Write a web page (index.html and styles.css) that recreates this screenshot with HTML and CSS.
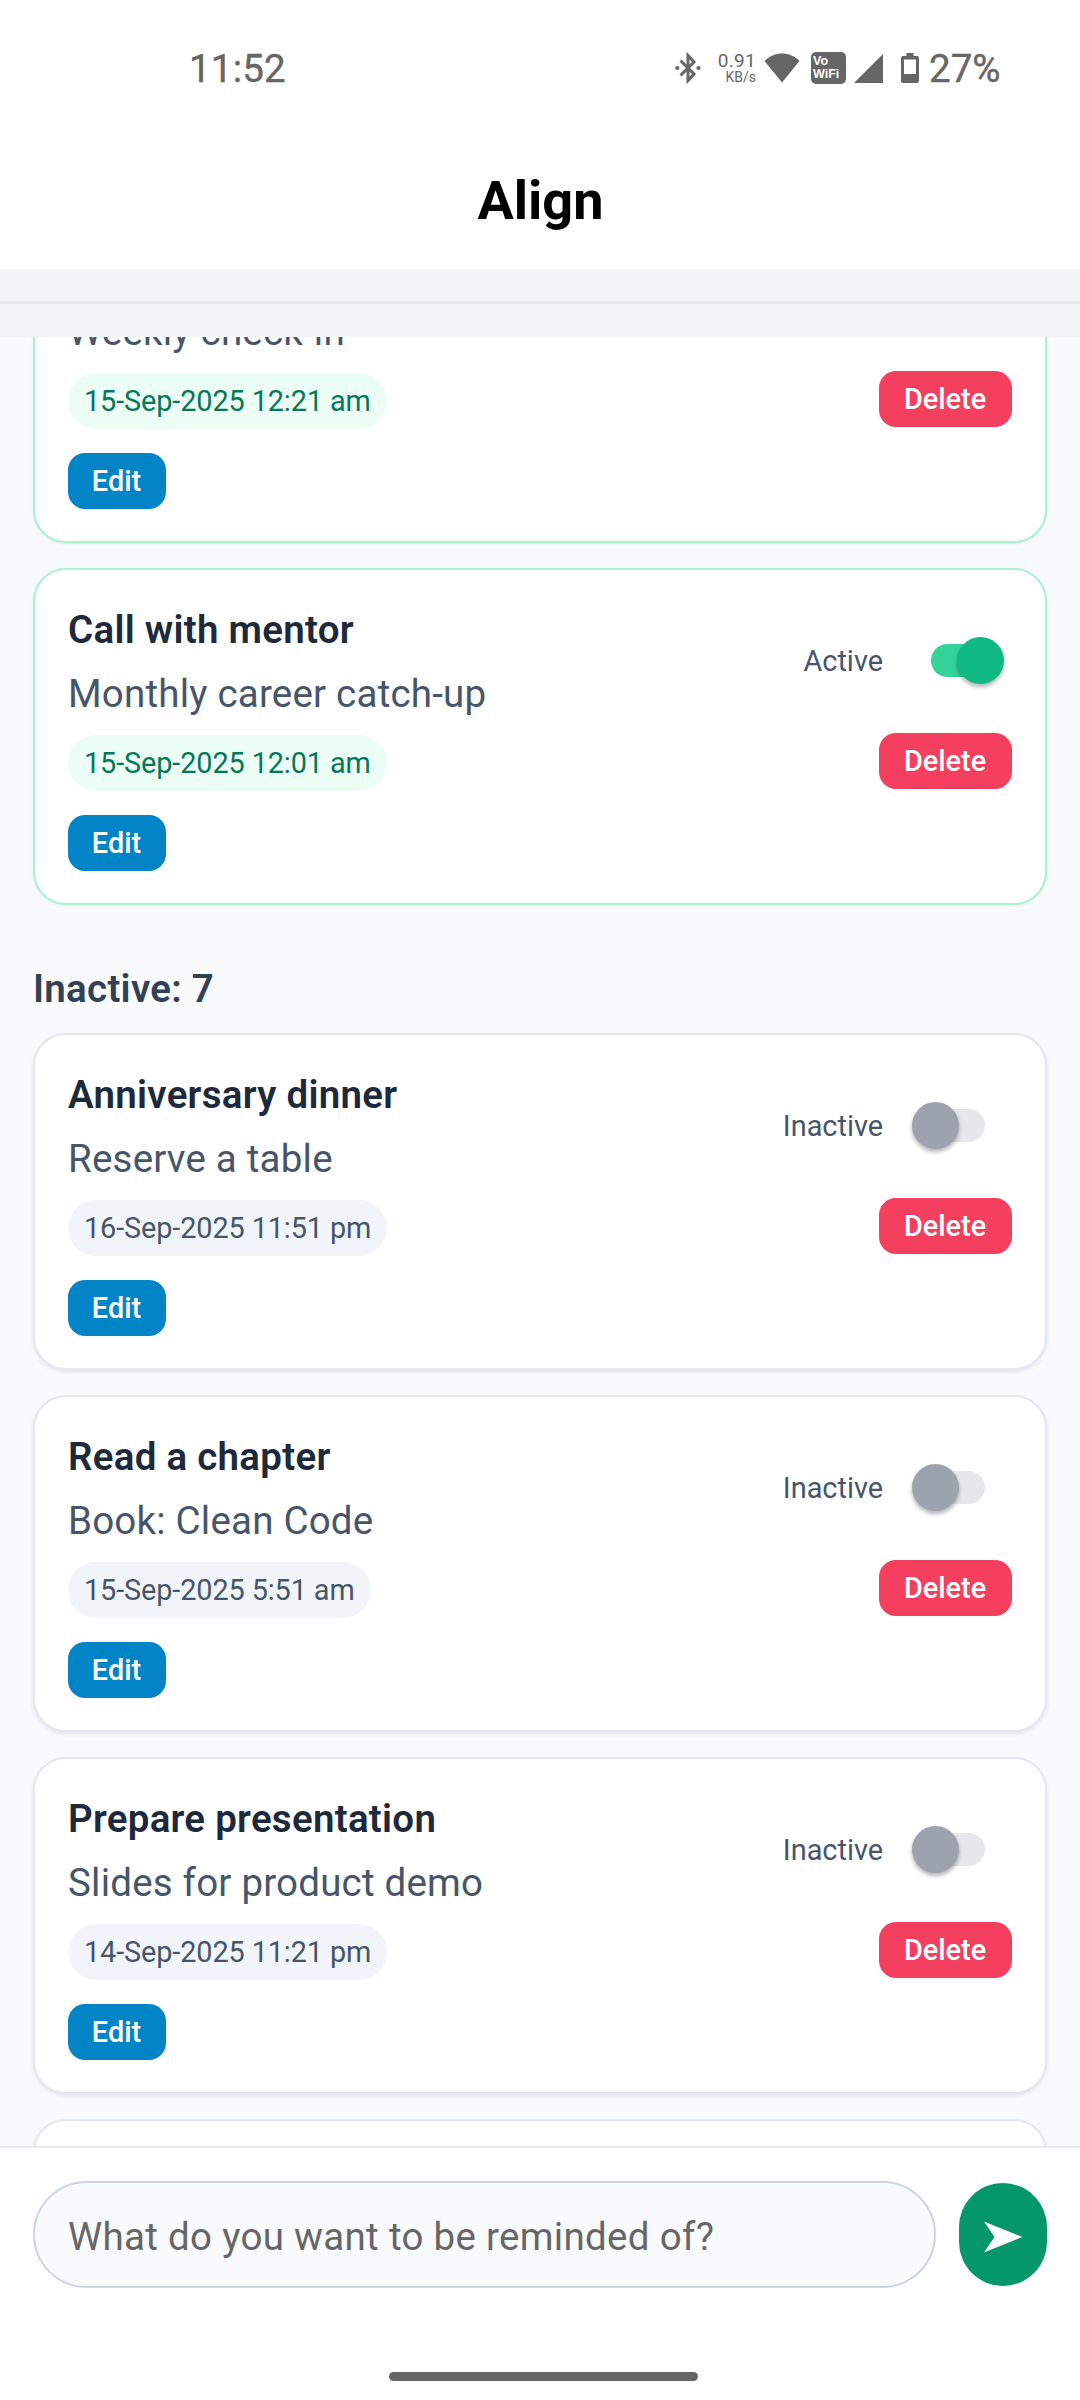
FILE: index.html
```html
<!DOCTYPE html>
<html lang="en">
<head>
<meta charset="utf-8">
<title>Align</title>
<link rel="stylesheet" href="styles.css">
</head>
<body>
<div class="app">
  <div class="status">
    <span class="clock">11:52</span>
    <svg class="bt" width="28" height="32" viewBox="0 0 28 32"><path d="M6.500 8.500 20 22 14 28.500V3.500L20 10 6.500 23.500" fill="none" stroke="#666" stroke-width="3"/><circle cx="3.300" cy="16" r="2.100" fill="#666"/><circle cx="24.500" cy="16" r="2.100" fill="#666"/></svg>
    <span class="speed"><span class="rate">0.91</span><span class="unit">KB/s</span></span>
    <svg class="wifi" width="36" height="30" viewBox="0 0 36 30"><path d="M0.500 8C10-2 26-2 35.500 8L18 29.500Z" fill="#666"/></svg>
    <span class="vowifi"><span>Vo</span><span>WiFi</span></span>
    <svg class="signal" width="29" height="29" viewBox="0 0 29 29"><path d="M29 0V29H0Z" fill="#666"/></svg>
    <svg class="battery" width="18" height="30" viewBox="0 0 18 30"><path fill-rule="evenodd" d="M5.500 0h7v3H16a2 2 0 0 1 2 2v23a2 2 0 0 1-2 2H2a2 2 0 0 1-2-2V5a2 2 0 0 1 2-2h3.500ZM3 6.500V21h12V6.500Z" fill="#666"/></svg>
    <span class="percent">27%</span>
  </div>
  <header class="header"><h1>Align</h1></header>
  <div class="divider"></div>
  <main class="scroller">
    <div class="list">
      <article class="card active">
        <div class="info">
          <h2></h2><p>Weekly check-in</p>
          <span class="chip">15-Sep-2025 12:21 am</span>
          <button class="btn edit">Edit</button>
        </div>
        <div class="controls">
          <div class="toggle"><i class="switch"></i></div>
          <button class="btn delete">Delete</button>
        </div>
      </article>
      <article class="card active">
        <div class="info">
          <h2>Call with mentor</h2><p>Monthly career catch-up</p>
          <span class="chip">15-Sep-2025 12:01 am</span>
          <button class="btn edit">Edit</button>
        </div>
        <div class="controls">
          <div class="toggle"><span>Active</span><i class="switch"></i></div>
          <button class="btn delete">Delete</button>
        </div>
      </article>
      <h3 class="section">Inactive: 7</h3>
      <article class="card">
        <div class="info">
          <h2>Anniversary dinner</h2><p>Reserve a table</p>
          <span class="chip">16-Sep-2025 11:51 pm</span>
          <button class="btn edit">Edit</button>
        </div>
        <div class="controls">
          <div class="toggle"><span>Inactive</span><i class="switch"></i></div>
          <button class="btn delete">Delete</button>
        </div>
      </article>
      <article class="card">
        <div class="info">
          <h2>Read a chapter</h2><p>Book: Clean Code</p>
          <span class="chip">15-Sep-2025 5:51 am</span>
          <button class="btn edit">Edit</button>
        </div>
        <div class="controls">
          <div class="toggle"><span>Inactive</span><i class="switch"></i></div>
          <button class="btn delete">Delete</button>
        </div>
      </article>
      <article class="card">
        <div class="info">
          <h2>Prepare presentation</h2><p>Slides for product demo</p>
          <span class="chip">14-Sep-2025 11:21 pm</span>
          <button class="btn edit">Edit</button>
        </div>
        <div class="controls">
          <div class="toggle"><span>Inactive</span><i class="switch"></i></div>
          <button class="btn delete">Delete</button>
        </div>
      </article>
      <article class="card"></article>
    </div>
  </main>
  <footer class="composer">
    <div class="field">What do you want to be reminded of?</div>
    <button class="send" aria-label="Send"><svg width="39" height="32" viewBox="0 0 39 32"><path d="M0 .5 38.500 16 0 31.500 10.500 16Z" fill="#fff"/></svg></button>
  </footer>
  <div class="nav"><div class="pill"></div></div>
</div>
</body>
</html>
```
FILE: styles.css
```css
* { box-sizing: border-box; }
body { margin: 0; font-family: Roboto, sans-serif; background: #fff; }
h1, h2, h3, p { margin: 0; }
button { border: 0; font-family: inherit; padding: 0; }
.app { width: 1080px; height: 2400px; display: flex; flex-direction: column; overflow: hidden; }

.status { height: 136px; flex: none; display: flex; align-items: center; padding: 0 78px 0 189px; color: #666; }
.status svg { flex: none; }
.clock { flex: 1; font-size: 38.500px; letter-spacing: 0.200px; font-weight: 400; -webkit-text-stroke: 0.400px #666; }
.speed { display: flex; flex-direction: column; align-items: flex-end; width: 54px; }
.rate { font-size: 19px; line-height: 18px; letter-spacing: 0.300px; }
.unit { font-size: 14px; line-height: 15px; }
.wifi { margin-left: 8px; }
.vowifi { width: 35px; height: 32px; margin-left: 11px; border-radius: 5px; background: #666; color: #fff; display: flex; flex-direction: column; justify-content: center; padding-left: 2px; font: bold 12.500px/13px "Liberation Sans", sans-serif; }
.signal { margin-left: 8px; }
.battery { margin-left: 18px; }
.percent { width: 73px; margin-left: 10px; font-size: 38.500px; -webkit-text-stroke: 0.400px #666; }

.header { height: 133px; flex: none; display: flex; justify-content: center; padding: 33px 0 0 1px; }
.header h1 { font-size: 54px; line-height: 64px; font-weight: 700; color: #000; }
.divider { height: 68px; flex: none; background: #f3f4f6; display: flex; align-items: center; padding-bottom: 1px; }
.divider::before { content: ""; width: 100%; height: 3px; background: #e5e7eb; }

.scroller { height: 1809px; flex: none; overflow: hidden; background: #f8fafc; }
.list { margin-top: -131px; padding: 0 33px; display: flex; flex-direction: column; gap: 25px; }
.card { height: 337px; flex: none; display: flex; justify-content: space-between; padding: 31px 33px; border: 2px solid #e2e8f0; border-radius: 33px; background: #fff; box-shadow: 0 2px 4px rgba(15, 23, 42, 0.100); }
.card.active { border-color: #a7f3d0; box-shadow: 0 1px 3px rgba(15, 23, 42, 0.080); }
.info { display: flex; flex-direction: column; align-items: flex-start; }
.info h2 { height: 57px; font-size: 38.500px; line-height: 57px; font-weight: 600; letter-spacing: 0.270px; color: #1e293b; }
.info p { margin-top: 7px; font-size: 38.500px; line-height: 57px; letter-spacing: 0.210px; color: #475569; }
.chip { height: 56px; margin-top: 13px; padding: 0 16px; border-radius: 28px; font-size: 28.875px; line-height: 56px; letter-spacing: -0.120px; background: #f1f5f9; color: #475569; }
.active .chip { background: #ecfdf5; color: #047857; }
.btn { height: 56px; border-radius: 17px; color: #fff; font-size: 28.875px; line-height: 55px; font-weight: 500; text-align: center; }
.edit { width: 98px; margin-top: 24px; padding-right: 1px; background: #0284c7; }
.delete { width: 133px; margin-top: 49px; padding-right: 1px; background: #f43f5e; }
.controls { display: flex; flex-direction: column; align-items: flex-end; padding-top: 36px; }
.toggle { height: 47px; display: flex; align-items: center; gap: 29px; font-size: 28.875px; color: #475569; }
.toggle span { padding-top: 2px; line-height: 47px; }
.switch { width: 100px; height: 47px; display: flex; align-items: center; }
.switch::before { content: ""; width: 67px; height: 33px; margin-left: 6px; border-radius: 17px; background: #e5e7eb; }
.switch::after { content: ""; width: 47px; height: 47px; margin-left: -73px; border-radius: 50%; background: #9ca3af; box-shadow: 0 3px 4px rgba(0, 0, 0, 0.300); }
.active .switch::before { margin-left: 19px; background: #34d399; }
.active .switch::after { margin-left: -41px; background: #10b981; }
.section { height: 78px; font-size: 38.500px; line-height: 118px; font-weight: 600; letter-spacing: 0.270px; color: #334155; }

.composer { height: 174px; flex: none; display: flex; align-items: flex-start; gap: 23px; padding: 33px 33px 0; border-top: 2px solid #e2e8f0; background: #fff; }
.field { width: 903px; height: 107px; padding-left: 33px; border: 2px solid #cbd5e1; border-radius: 54px; background: #f8fafc; font-size: 38.500px; line-height: 107px; letter-spacing: 0.310px; color: #666; }
.send { width: 88px; height: 103px; margin-top: 2px; border-radius: 44px; background: #059669; display: flex; align-items: center; justify-content: center; padding: 4px 0 0; }
.nav { flex: 1; display: flex; justify-content: center; align-items: flex-start; padding: 52px 0 0 7px; }
.pill { width: 309px; height: 9px; border-radius: 5px; background: #666; }
```
